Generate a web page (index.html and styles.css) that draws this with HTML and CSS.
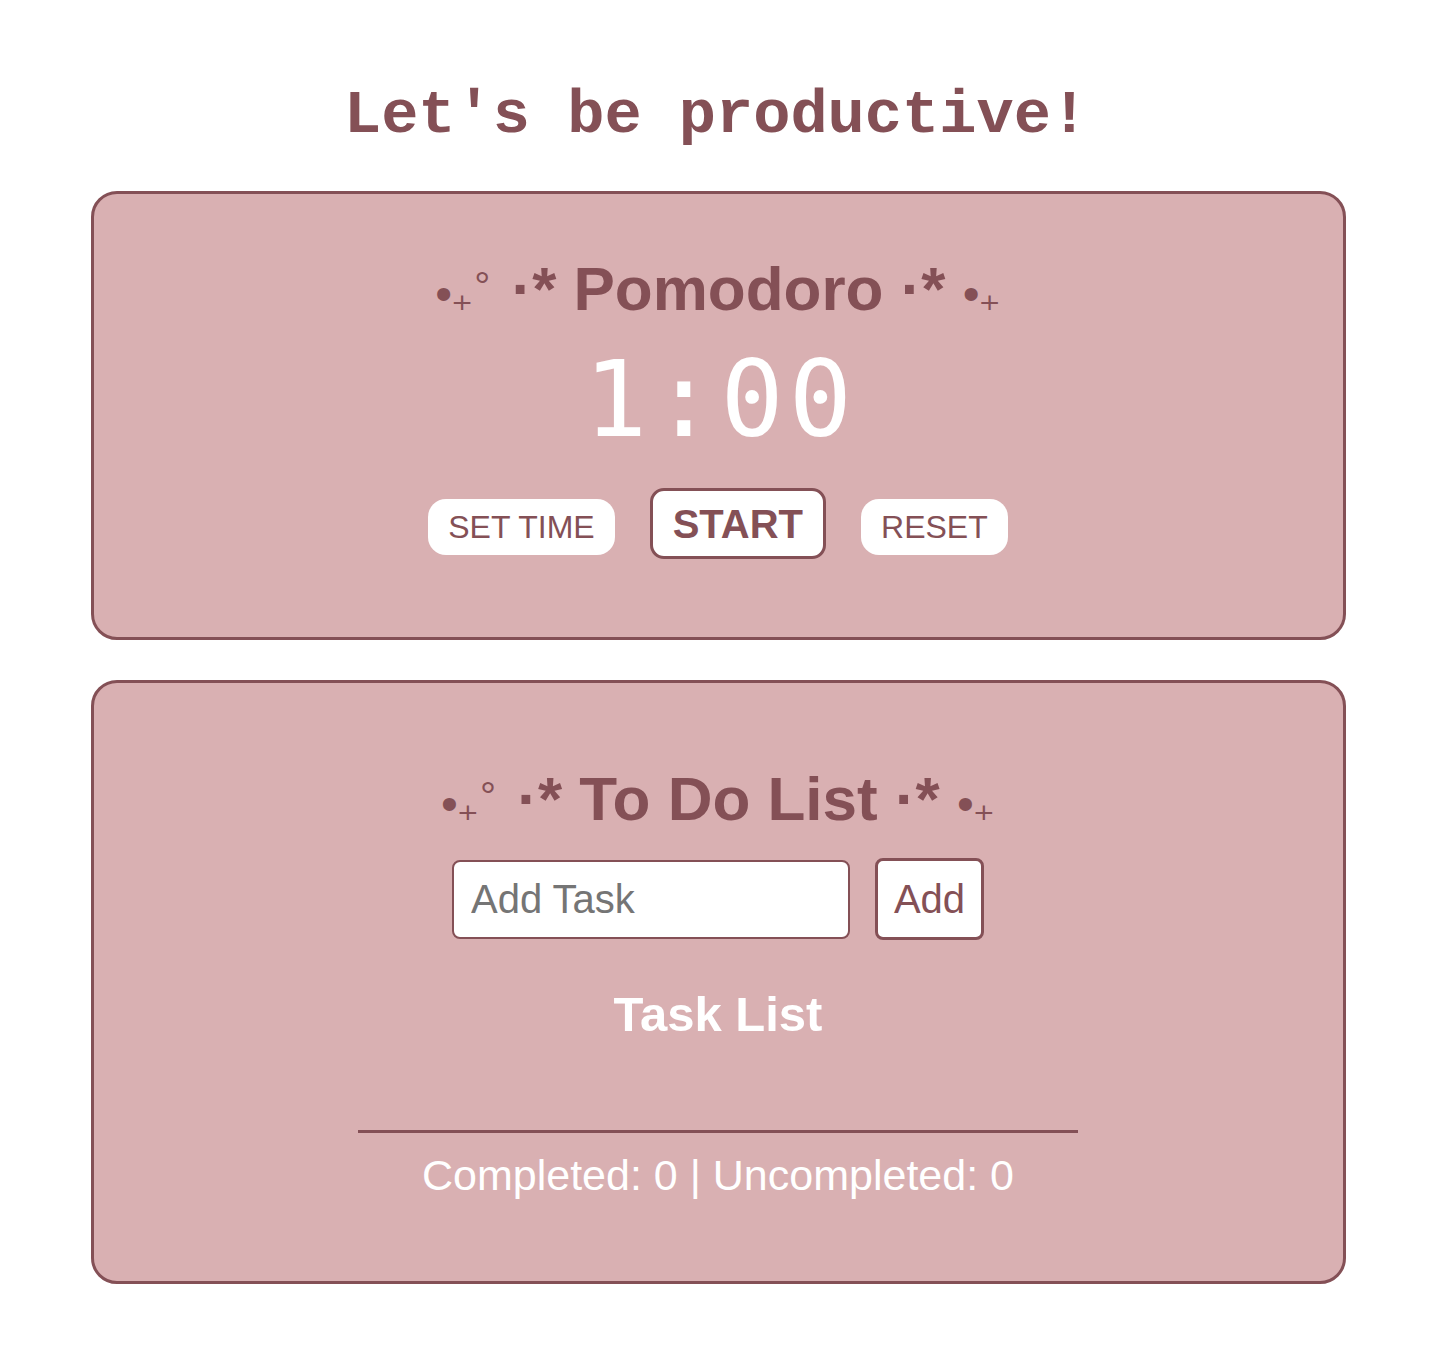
FILE: index.html
```html
<!DOCTYPE html>
<html lang="en">
<head>
<meta charset="utf-8">
<title>Let's be productive!</title>
<link rel="stylesheet" href="styles.css">
</head>
<body>
  <h1 class="page-title">Let's be productive!</h1>

  <section class="card card-timer">
    <h2 class="card-title"><span class="deco deco-left"><span class="bul">•</span><span class="sub">₊</span><span class="ring">°</span></span> ·* Pomodoro ·* <span class="deco"><span class="bul">•</span><span class="sub">₊</span></span></h2>
    <div class="timer">1:00</div>
    <div class="controls">
      <button class="btn">SET TIME</button>
      <button class="btn btn-main">START</button>
      <button class="btn">RESET</button>
    </div>
  </section>

  <section class="card card-todo">
    <h2 class="card-title"><span class="deco deco-left"><span class="bul">•</span><span class="sub">₊</span><span class="ring">°</span></span> ·* To Do List ·* <span class="deco"><span class="bul">•</span><span class="sub">₊</span></span></h2>
    <div class="add-row">
      <input class="task-input" type="text" placeholder="Add Task">
      <button class="add-btn">Add</button>
    </div>
    <h3 class="list-title">Task List</h3>
    <ul class="task-list"></ul>
    <div class="divider"></div>
    <p class="stats">Completed: 0 | Uncompleted: 0</p>
  </section>
</body>
</html>
```
FILE: styles.css
```css
html, body {
  margin: 0;
  padding: 0;
  background: #ffffff;
}

body {
  display: flex;
  flex-direction: column;
  align-items: center;
  padding: 81px 0 82px 4px;
  font-family: "Liberation Sans", Arial, sans-serif;
  color: #845056;
}

.page-title {
  margin: 0 0 40px -4px;
  font-family: "Courier New", "Liberation Mono", monospace;
  font-weight: bold;
  font-size: 62px;
  line-height: 70px;
  color: #845056;
}

.card {
  box-sizing: border-box;
  width: 1255px;
  background: #d9b0b2;
  border: 3px solid #845056;
  border-radius: 26px;
  display: flex;
  flex-direction: column;
  align-items: center;
}

.card-timer {
  padding: 60px 20px 78px;
  margin-bottom: 40px;
}

.card-todo {
  padding: 81px 20px 82px;
}

.card-title {
  margin: 0;
  font-size: 62px;
  line-height: 69px;
  font-weight: bold;
  color: #845056;
  white-space: nowrap;
}

.deco {
  font-weight: normal;
  line-height: 0;
}

.deco-left {
  margin-right: 4px;
}

.bul {
  font-family: "Liberation Sans", Arial, sans-serif;
  font-size: 48px;
}

.sub {
  font-family: "DejaVu Sans", sans-serif;
  font-size: 42px;
  font-weight: normal;
  margin-left: -1px;
}

.ring {
  font-family: "Liberation Sans", Arial, sans-serif;
  font-size: 40px;
  vertical-align: 10px;
  margin-left: 1px;
}

.timer {
  margin-top: 16px;
  padding-left: 5px;
  font-family: "DejaVu Sans Mono", monospace;
  font-size: 105px;
  line-height: 122px;
  letter-spacing: 5px;
  color: #ffffff;
}

.controls {
  margin-top: 27px;
  display: flex;
  align-items: baseline;
  gap: 35px;
}

.btn {
  font-family: "Liberation Sans", Arial, sans-serif;
  font-size: 32px;
  line-height: 36px;
  color: #845056;
  background: #ffffff;
  border: none;
  border-radius: 18px;
  padding: 10px 20px;
  cursor: pointer;
}

.btn-main {
  font-weight: bold;
  font-size: 40px;
  line-height: 46px;
  border: 3px solid #845056;
  border-radius: 14px;
  padding: 10px 20px 9px;
}

.add-row {
  margin-top: 25px;
  display: flex;
  align-items: center;
  gap: 25px;
}

.task-input {
  box-sizing: border-box;
  width: 398px;
  height: 79px;
  border: 2px solid #845056;
  border-radius: 8px;
  background: #ffffff;
  padding: 0 17px;
  font-family: "Liberation Sans", Arial, sans-serif;
  font-size: 40px;
  color: #333333;
  outline: none;
}

.task-input::placeholder {
  color: #757575;
}

.add-btn {
  box-sizing: border-box;
  width: 109px;
  height: 82px;
  border: 3px solid #845056;
  border-radius: 8px;
  background: #ffffff;
  font-family: "Liberation Sans", Arial, sans-serif;
  font-size: 40px;
  color: #845056;
  padding: 0;
  cursor: pointer;
}

.list-title {
  margin: 47px 0 0;
  font-size: 49px;
  line-height: 55px;
  font-weight: bold;
  color: #ffffff;
}

.task-list {
  list-style: none;
  margin: 0;
  padding: 0;
  height: 88px;
}

.divider {
  width: 720px;
  height: 3px;
  background: #845056;
}

.stats {
  margin: 18px 0 0;
  font-size: 43px;
  line-height: 48px;
  color: #ffffff;
}
```
